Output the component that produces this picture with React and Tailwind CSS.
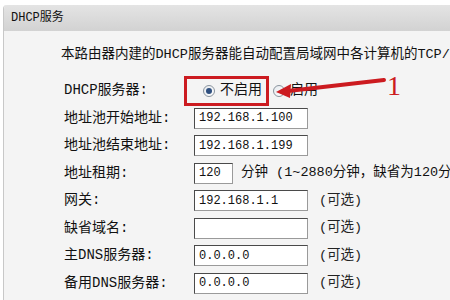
import React from 'react';

const font = { fontFamily: '"Liberation Mono", "Noto Sans CJK SC", monospace' };

const Radio = ({ checked }) => (
  <span className="inline-flex shrink-0 items-center justify-center w-[12px] h-[12px] rounded-full border border-[#8a949e] bg-gradient-to-br from-[#e6eaee] to-white">
    {checked && <span className="w-[6px] h-[6px] rounded-full bg-[#2f4f7f]" />}
  </span>
);

const Field = ({ value, w = 'w-[114px]' }) => (
  <div className={`${w} shrink-0 h-[21px] bg-white border border-[#4a4a4a] border-r-[#9a9a9a] border-b-[#9a9a9a] pl-[4px] flex items-center text-[12px] text-[#111] leading-none`}>
    {value}
  </div>
);

const Optional = () => <span className="ml-[11px] text-[13.5px] text-[#222]">(可选)</span>;

const rows = [
  { label: '地址池开始地址:', value: '192.168.1.100' },
  { label: '地址池结束地址:', value: '192.168.1.199' },
  { label: '地址租期:', value: '120', lease: true },
  { label: '网关:', value: '192.168.1.1', opt: true },
  { label: '缺省域名:', value: '', opt: true },
  { label: '主DNS服务器:', value: '0.0.0.0', opt: true },
  { label: '备用DNS服务器:', value: '0.0.0.0', opt: true },
];

export default function App() {
  return (
    <div className="relative w-[450px] h-[300px] overflow-hidden bg-white pt-[5px] pl-[3px]" style={font}>
      <div className="h-full border-l border-[#c8c8c8] rounded-tl-[4px] overflow-hidden">
        <div className="h-[26px] bg-gradient-to-b from-[#e4e4e4] to-[#d2d2d2] flex items-center pl-[7px] text-[12px] text-[#111]">
          DHCP服务
        </div>
        <div className="h-full bg-[#f4f4f4] pt-[15px]">
          <div className="pl-[57px] h-[18px] leading-[18px] text-[13.5px] text-[#111] whitespace-nowrap">
            本路由器内建的DHCP服务器能自动配置局域网中各计算机的TCP/IP协议。
          </div>
          <div className="mt-[13px]">
            <div className="flex items-center h-[27.5px]">
              <div className="w-[190px] shrink-0 pl-[60px] text-[14px] text-[#111]">DHCP服务器:</div>
              <div className="-ml-[10px] shrink-0 w-[85px] h-[30px] border-[3px] border-[#cc1b20] flex items-center pl-[16px] gap-[5px] text-[14px] text-[#111]">
                <Radio checked />
                <span>不启用</span>
              </div>
              <div className="ml-[4px] flex items-center gap-[5px] text-[14px] text-[#111]">
                <Radio />
                <span>启用</span>
              </div>
            </div>
            {rows.map((r) => (
              <div key={r.label} className="flex items-center h-[27.5px]">
                <div className="w-[190px] shrink-0 pl-[60px] text-[14px] text-[#111] whitespace-nowrap">{r.label}</div>
                {r.lease ? (
                  <>
                    <Field value={r.value} w="w-[39px]" />
                    <span className="ml-[8px] text-[13.5px] text-[#111] whitespace-nowrap">分钟 (1~2880分钟，缺省为120分钟)</span>
                  </>
                ) : (
                  <>
                    <Field value={r.value} />
                    {r.opt && <Optional />}
                  </>
                )}
              </div>
            ))}
          </div>
        </div>
      </div>
      <svg className="absolute left-0 top-0" width="450" height="300">
        <line x1="288" y1="91" x2="384" y2="80" stroke="#cc1b20" strokeWidth="4" strokeLinecap="round" />
        <polygon points="276,92 291,84 290,98" fill="#cc1b20" />
      </svg>
      <span
        className="absolute left-[387px] top-[72px] text-[28px] leading-none text-[#cc1b20]"
        style={{ fontFamily: '"Liberation Serif", serif' }}
      >
        1
      </span>
    </div>
  );
}
